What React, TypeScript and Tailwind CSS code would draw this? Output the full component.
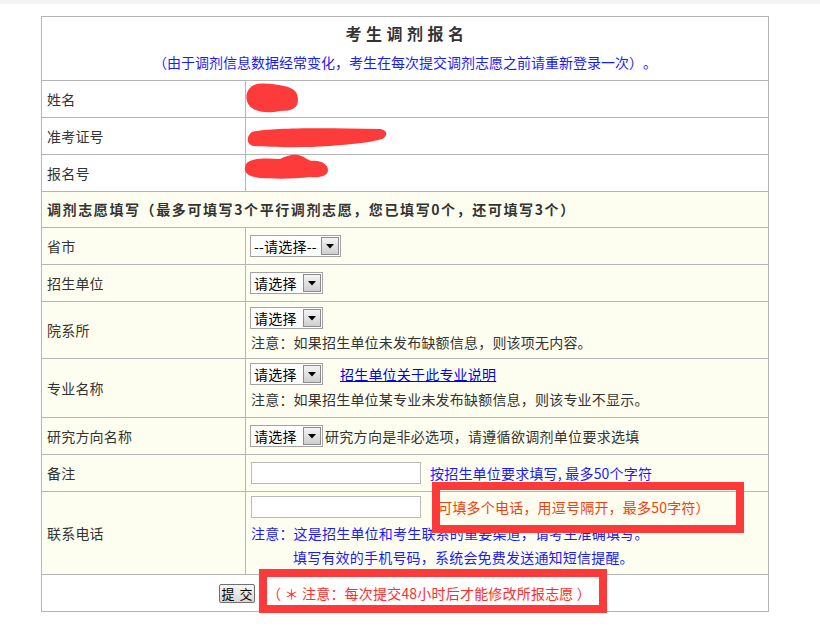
import React from "react";

const Select = ({ label, w }: { label: string; w: string }) => (
  <div className={`inline-flex h-[22px] items-stretch border border-[#a3a3a3] bg-white ${w}`}>
    <span className="flex-1 pl-[3px] leading-[20px] text-black whitespace-nowrap">{label}</span>
    <span className="my-[1px] mr-[1px] flex w-[18px] items-center justify-center border border-[#8c8c8c] bg-gradient-to-b from-[#f4f4f4] to-[#cfcfcf]">
      <svg width="8" height="5" viewBox="0 0 8 5">
        <path d="M0 0 L8 0 L4 4.5 Z" fill="#000" />
      </svg>
    </span>
  </div>
);

const Input = () => <div className="h-[22px] w-[170px] border border-[#b9b9b9] bg-white" />;

const Label = ({ children }: { children: React.ReactNode }) => (
  <div className="flex w-[204px] shrink-0 items-center border-r border-[#b5b5b5] pl-[5px] text-[#333]">{children}</div>
);

export default function App() {
  return (
    <div className="relative h-[626px] w-[820px] bg-white font-['Noto_Sans_CJK_SC','Liberation_Sans',sans-serif] text-[14px] tracking-[0.2px] [text-spacing-trim:space-all]">
      <div className="h-[4px] bg-[#f4f4f4]" />
      <div className="ml-[41px] mt-[12px] w-[728px] border border-[#b5b5b5]">
        {/* title */}
        <div className="flex h-[63px] flex-col items-center bg-white pt-[6px]">
          <div className="pl-[4px] text-[16px] font-bold leading-[20px] tracking-[4.5px] text-[#333]">考生调剂报名</div>
          <div className="mt-[9px] leading-[20px] tracking-[0px] text-[#1a1aff]">（由于调剂信息数据经常变化，考生在每次提交调剂志愿之前请重新登录一次）。</div>
        </div>
        {/* personal */}
        <div className="flex h-[37px] border-t border-[#b5b5b5] bg-white">
          <Label>姓名</Label>
          <div className="flex-1" />
        </div>
        <div className="flex h-[37px] border-t border-[#b5b5b5] bg-white">
          <Label>准考证号</Label>
          <div className="flex-1" />
        </div>
        <div className="flex h-[37px] border-t border-[#b5b5b5] bg-white">
          <Label>报名号</Label>
          <div className="flex-1" />
        </div>
        {/* header */}
        <div className="flex h-[36px] items-center border-t border-[#b5b5b5] bg-[#fefef0] pl-[5px] font-bold tracking-[1.6px] text-[#333]">
          调剂志愿填写（最多可填写3个平行调剂志愿，您已填写0个，还可填写3个）
        </div>
        <div className="flex h-[37px] border-t border-[#b5b5b5] bg-[#fefef0]">
          <Label>省市</Label>
          <div className="flex flex-1 items-center pl-[4px]">
            <Select label="--请选择--" w="w-[91px]" />
          </div>
        </div>
        <div className="flex h-[37px] border-t border-[#b5b5b5] bg-[#fefef0]">
          <Label>招生单位</Label>
          <div className="flex flex-1 items-center pl-[4px]">
            <Select label="请选择" w="w-[73px]" />
          </div>
        </div>
        <div className="flex h-[57px] border-t border-[#b5b5b5] bg-[#fefef0]">
          <Label>院系所</Label>
          <div className="flex flex-1 flex-col items-start pl-[4px] pt-[5px]">
            <Select label="请选择" w="w-[73px]" />
            <div className="mt-[3px] pl-[1px] leading-[20px] text-[#333]">注意：如果招生单位未发布缺额信息，则该项无内容。</div>
          </div>
        </div>
        <div className="flex h-[59px] border-t border-[#b5b5b5] bg-[#fefef0]">
          <Label>专业名称</Label>
          <div className="flex flex-1 flex-col items-start pl-[4px] pt-[4px]">
            <div className="flex items-center">
              <Select label="请选择" w="w-[73px]" />
              <a className="ml-[17px] leading-[20px] text-[#0000ee] underline">招生单位关于此专业说明</a>
            </div>
            <div className="mt-[4px] pl-[1px] leading-[20px] text-[#333]">注意：如果招生单位某专业未发布缺额信息，则该专业不显示。</div>
          </div>
        </div>
        <div className="flex h-[37px] border-t border-[#b5b5b5] bg-[#fefef0]">
          <Label>研究方向名称</Label>
          <div className="flex flex-1 items-center pl-[4px]">
            <Select label="请选择" w="w-[73px]" />
            <span className="ml-[2px] tracking-[0.3px] text-[#333]">研究方向是非必选项，请遵循欲调剂单位要求选填</span>
          </div>
        </div>
        <div className="flex h-[37px] border-t border-[#b5b5b5] bg-[#fefef0]">
          <Label>备注</Label>
          <div className="flex flex-1 items-center pl-[5px]">
            <Input />
            <span className="ml-[9px] text-[#1a1aff]">按招生单位要求填写, 最多50个字符</span>
          </div>
        </div>
        <div className="flex h-[83px] border-t border-[#b5b5b5] bg-[#fefef0]">
          <Label>联系电话</Label>
          <div className="flex flex-1 flex-col items-start pl-[5px] pt-[4px]">
            <div className="flex items-center">
              <Input />
              <span className="ml-[3px] text-[#f4400f]">（可填多个电话，用逗号隔开，最多50字符）</span>
            </div>
            <div className="mt-[3px] leading-[24px] text-[#1a1aff]">
              <div>注意：这是招生单位和考生联系的重要渠道，请考生准确填写。</div>
              <div className="pl-[42px]">填写有效的手机号码，系统会免费发送通知短信提醒。</div>
            </div>
          </div>
        </div>
        <div className="flex h-[37px] items-center justify-center border-t border-[#b5b5b5] bg-white">
          <button className="flex h-[19px] w-[36px] items-center justify-center gap-[5px] rounded-[2px] border border-[#6f6f6f] bg-gradient-to-b from-[#f6f6f6] to-[#d9d9d9] p-0 text-[13px] leading-[17px] tracking-[0px] text-black">
            <span>提</span>
            <span>交</span>
          </button>
          <span className="ml-[12px] whitespace-pre text-[#ff2d2d]">（ ＊ 注意：每次提交48小时后才能修改所报志愿 ）</span>
        </div>
      </div>

      {/* redaction scribbles */}
      <svg className="absolute left-[240px] top-[80px]" width="160" height="110" viewBox="0 0 160 110">
        <path d="M10,8 C14,2 30,3 44,6 C54,8 58,12 58,20 C58,28 52,31 40,31 C30,33 18,33 12,28 C6,24 4,14 10,8 Z" fill="#fd3b3b" />
        <path d="M12,52 C30,47 90,48 140,49 C148,50 148,56 142,59 C130,63 110,64 90,66 C60,68 30,67 14,66 C6,65 6,56 12,52 Z" fill="#fd3b3b" />
        <path d="M6,84 C10,78 25,78 40,79 C46,76 52,74 58,75 C64,76 67,80 72,81 C80,80 88,84 88,90 C88,96 80,98 70,97 C55,99 35,99 20,98 C8,97 2,92 6,84 Z" fill="#fd3b3b" />
      </svg>

      {/* annotation boxes */}
      <div className="absolute left-[432px] top-[482px] h-[51px] w-[312px] border-[8px] border-[#fc3a3a]" />
      <div className="absolute left-[259px] top-[569px] h-[44px] w-[348px] border-[8px] border-[#fc3a3a]" />
    </div>
  );
}
